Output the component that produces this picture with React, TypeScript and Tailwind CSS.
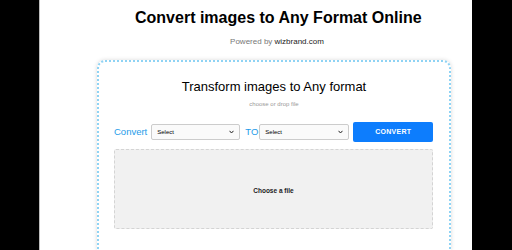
import React from "react";

export default function App() {
  return (
    <div className="w-[512px] h-[250px] bg-black flex overflow-hidden" style={{ fontFamily: '"Liberation Sans", Arial, sans-serif' }}>
      <div className="ml-[39px] w-[433px] h-full bg-white border-l border-[#bdbdbd] flex flex-col">
        <h1 className="mt-[8px] ml-[95px] w-[284px] text-center text-[16px] leading-[19px] font-bold text-black whitespace-nowrap">
          Convert images to Any Format Online
        </h1>
        <p className="mt-[10px] ml-[95px] w-[284px] text-center text-[8px] leading-[10px] text-[#777] whitespace-nowrap">
          Powered by <span className="text-[#222]">wizbrand.com</span>
        </p>
        <div className="mt-[13px] ml-[57px] w-[354px] flex-1 rounded-t-[8px] border-2 border-b-0 border-dotted border-[#8fd3f4] shadow-[0_0_4px_rgba(0,0,0,0.15)] px-[15px] pt-[17px]">
          <h2 className="text-center text-[13px] leading-[16px] text-black whitespace-nowrap">Transform images to Any format</h2>
          <p className="mt-[5px] text-center text-[6px] leading-[8px] text-[#999]">choose or drop file</p>
          <div className="mt-[14px] flex items-center h-[20px]">
            <span className="text-[9.5px] text-[#1e9be9] leading-none">Convert</span>
            <div className="ml-[4px] w-[89px] h-[16px] border border-[#ccc] rounded-[2px] bg-[#fafafa] flex items-center justify-between px-[5px]">
              <span className="text-[6px] text-black">Select</span>
              <svg width="5" height="4" viewBox="0 0 5 4"><path d="M0.5 0.8 L2.5 3 L4.5 0.8" stroke="#222" strokeWidth="1" fill="none" /></svg>
            </div>
            <span className="ml-[5px] text-[9.5px] text-[#1e9be9] leading-none">TO</span>
            <div className="ml-[1px] w-[90px] h-[16px] border border-[#ccc] rounded-[2px] bg-[#fafafa] flex items-center justify-between px-[5px]">
              <span className="text-[6px] text-black">Select</span>
              <svg width="5" height="4" viewBox="0 0 5 4"><path d="M0.5 0.8 L2.5 3 L4.5 0.8" stroke="#222" strokeWidth="1" fill="none" /></svg>
            </div>
            <button className="ml-[4px] w-[80px] h-[20px] rounded-[2px] bg-[#0d7dfd] text-white text-[7px] font-bold tracking-[0.3px]">CONVERT</button>
          </div>
          <div className="mt-[7px] w-[319px] h-[80px] bg-[#f1f1f1] border border-dashed border-[#d4d4d4] rounded-[2px] flex items-center justify-center pt-[3px]">
            <span className="text-[6.5px] font-bold text-[#222]">Choose a file</span>
          </div>
        </div>
      </div>
    </div>
  );
}
